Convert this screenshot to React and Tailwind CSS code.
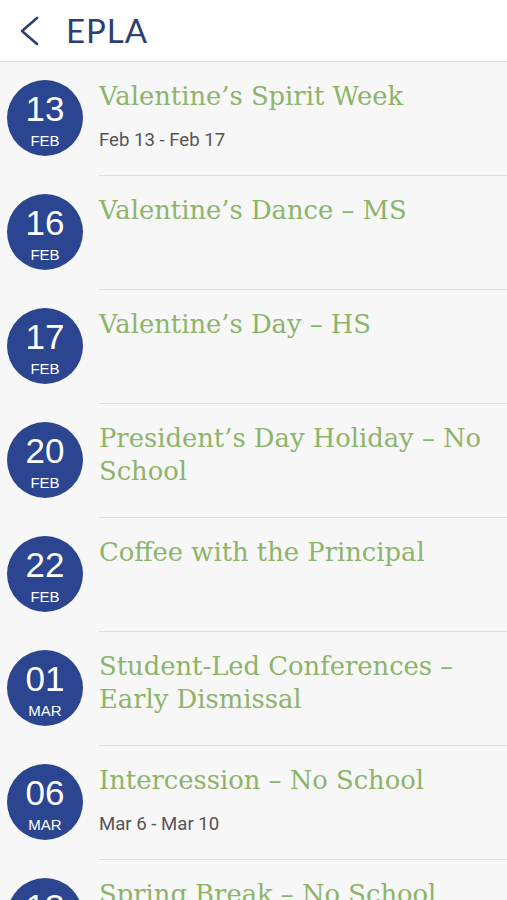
import React from "react";

const EVENTS = [
  { day: "13", month: "FEB", title: "Valentine\u2019s Spirit Week", range: "Feb 13 - Feb 17" },
  { day: "16", month: "FEB", title: "Valentine\u2019s Dance \u2013 MS" },
  { day: "17", month: "FEB", title: "Valentine\u2019s Day \u2013 HS" },
  { day: "20", month: "FEB", title: "President\u2019s Day Holiday \u2013 No School" },
  { day: "22", month: "FEB", title: "Coffee with the Principal" },
  { day: "01", month: "MAR", title: "Student-Led Conferences \u2013 Early Dismissal" },
  { day: "06", month: "MAR", title: "Intercession \u2013 No School", range: "Mar 6 - Mar 10" },
  { day: "13", month: "MAR", title: "Spring Break \u2013 No School", range: "Mar 13 - Mar 17" },
];

const SANS = { fontFamily: '"Liberation Sans", Arial, sans-serif' };

function DateBadge({ day, month }) {
  return (
    <div className="flex h-[76px] w-[76px] flex-col items-center justify-center rounded-full bg-[#2c4591] text-white">
      <span className="mt-[4px] text-[35px] leading-[36px]" style={SANS}>
        {day}
      </span>
      <span className="mt-[6px] text-[15px] leading-[16px]" style={SANS}>
        {month}
      </span>
    </div>
  );
}

function EventRow({ event }) {
  return (
    <div className="flex h-[114px]">
      <div className="w-[99px] shrink-0 pl-[7px] pt-[18px]">
        <DateBadge day={event.day} month={event.month} />
      </div>
      <div className="flex-1 border-b border-[#dcdcdc] pr-4 pt-[18px]">
        <h3
          className="text-[25.8px] font-light leading-[33px] text-[#8cb46a]"
          style={{ fontFamily: '"DejaVu Serif", serif' }}
        >
          {event.title}
        </h3>
        {event.range && (
          <p className="mt-[14px] text-[18.6px] text-[#555555]" style={{ fontFamily: "Roboto, sans-serif" }}>
            {event.range}
          </p>
        )}
      </div>
    </div>
  );
}

export default function App() {
  return (
    <div className="h-[900px] w-[507px] overflow-hidden bg-[#f7f7f7]">
      <header className="flex h-[62px] items-center border-b border-[#dedede] bg-white">
        <svg className="ml-[18px]" width="22" height="30" viewBox="0 0 22 30" fill="none">
          <path d="M19 2 L4 15 L19 28" stroke="#2f3e72" strokeWidth="2.6" strokeLinecap="round" strokeLinejoin="round" />
        </svg>
        <h1 className="ml-[26px] text-[33px] tracking-[1px] text-[#2f3e72]" style={{ fontFamily: "Lato, sans-serif" }}>
          EPLA
        </h1>
      </header>
      <div>
        {EVENTS.map((event, i) => (
          <EventRow key={i} event={event} />
        ))}
      </div>
    </div>
  );
}
